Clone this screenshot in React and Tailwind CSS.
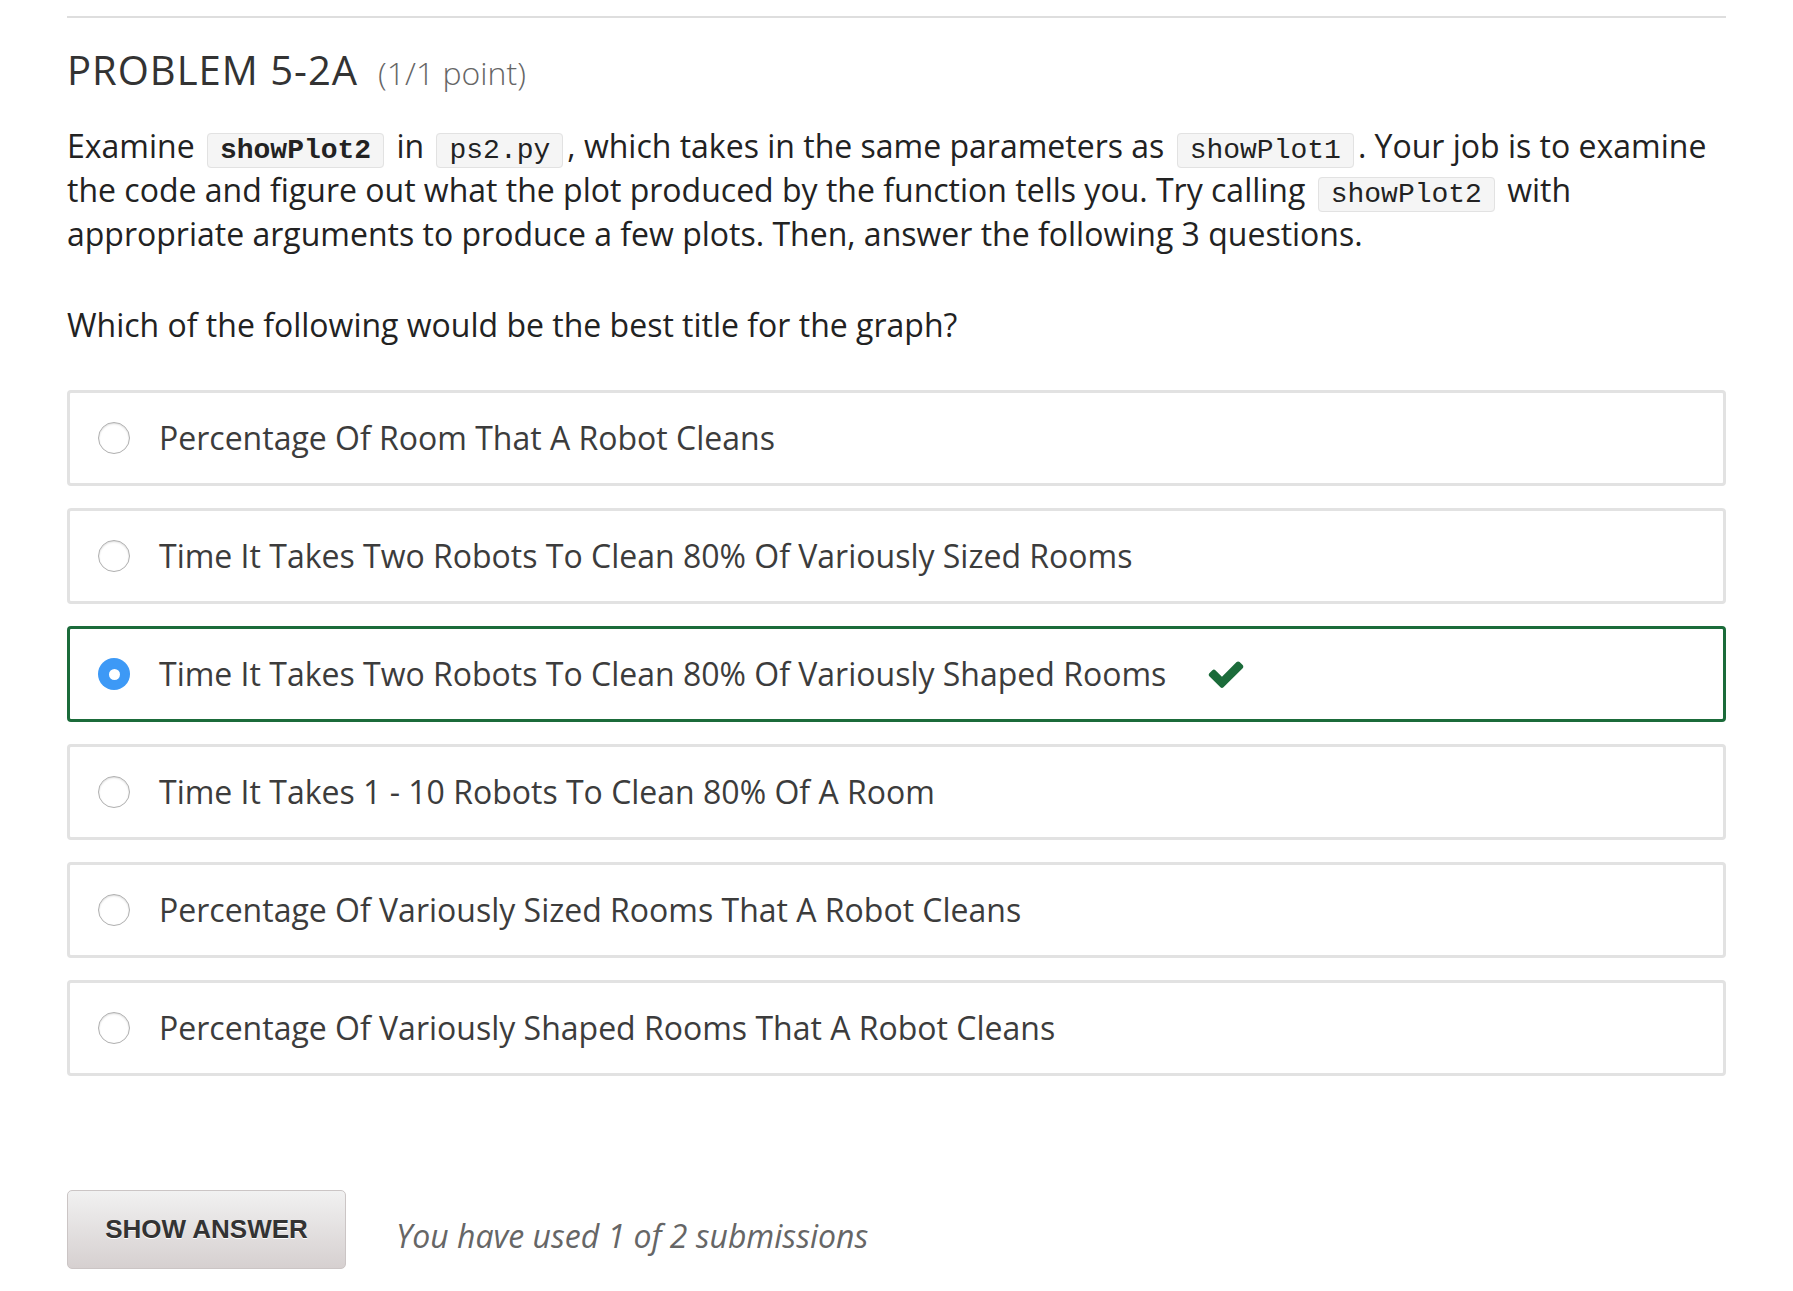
import React from 'react';

const options = [
  { id: 'a', label: 'Percentage Of Room That A Robot Cleans' },
  { id: 'b', label: 'Time It Takes Two Robots To Clean 80% Of Variously Sized Rooms' },
  { id: 'c', label: 'Time It Takes Two Robots To Clean 80% Of Variously Shaped Rooms', correct: true },
  { id: 'd', label: 'Time It Takes 1 - 10 Robots To Clean 80% Of A Room' },
  { id: 'e', label: 'Percentage Of Variously Sized Rooms That A Robot Cleans' },
  { id: 'f', label: 'Percentage Of Variously Shaped Rooms That A Robot Cleans' },
];

const Code = ({ children, bold }) => (
  <code
    className={
      "mx-1 px-[12px] py-px rounded-[4px] border border-[#e2e2e2] bg-[#f5f5f5] text-[28px] leading-[20px] text-[#222] font-['Liberation_Mono',monospace] " +
      (bold ? 'font-bold' : 'font-normal')
    }
  >
    {children}
  </code>
);

const CheckIcon = () => (
  <svg viewBox="0 0 1792 1792" className="w-[40px] h-[40px] fill-[#1b6b3a]">
    <path d="M1671 566q0 40-28 68l-724 724-136 136q-28 28-68 28t-68-28l-136-136-362-362q-28-28-28-68t28-68l136-136q28-28 68-28t68 28l294 295 656-657q28-28 68-28t68 28l136 136q28 28 28 68z" />
  </svg>
);

const Radio = ({ checked }) =>
  checked ? (
    <span className="flex items-center justify-center w-[32px] h-[32px] rounded-full bg-[#3d99f6] shrink-0">
      <span className="w-[11px] h-[11px] rounded-full bg-white" />
    </span>
  ) : (
    <span className="w-[32px] h-[32px] rounded-full border border-[#b0b0b0] bg-white shadow-[inset_0_1px_2px_rgba(0,0,0,0.15)] shrink-0" />
  );

export default function App() {
  const selected = 'c';

  return (
    <div className="min-h-screen bg-white px-[67px] pt-[16px] font-['Open_Sans',sans-serif]">
      <div className="border-t-2 border-[#dedede]" />

      {/* Problem header */}
      <h2 className="mt-[28px] flex items-baseline leading-[48px]">
        <span className="text-[40px] tracking-[1px] text-[#333]">PROBLEM 5-2A</span>
        <span className="ml-[20px] text-[32px] font-light text-[#666]">(1/1 point)</span>
      </h2>

      <p className="mt-[27px] text-[32px] leading-[44px] text-[#222]">
        Examine <Code bold>showPlot2</Code> in <Code>ps2.py</Code>, which takes in the same parameters as{' '}
        <Code>showPlot1</Code>. Your job is to examine the code and figure out what the plot produced by the
        function tells you. Try calling <Code>showPlot2</Code> with appropriate arguments to produce a few plots.
        Then, answer the following 3 questions.
      </p>

      <p className="mt-[47px] text-[32px] leading-[44px] text-[#222]">
        Which of the following would be the best title for the graph?
      </p>

      <div className="mt-[43px] flex flex-col gap-[22px]">
        {options.map((opt) => {
          const isSel = opt.id === selected;
          return (
            <label
              key={opt.id}
              className={
                'flex items-center h-[96px] rounded-[4px] border-[3px] pl-[28px] ' +
                (isSel ? 'border-[#1b6b3a]' : 'border-[#e2e2e2]')
              }
            >
              <Radio checked={isSel} />
              <span className="ml-[29px] text-[32px] text-[#3c3c3c]">{opt.label}</span>
              {opt.correct && isSel && (
                <span className="ml-[40px] flex items-center">
                  <CheckIcon />
                </span>
              )}
            </label>
          );
        })}
      </div>

      <div className="mt-[114px] flex items-center">
        <button className="w-[279px] h-[79px] rounded-[5px] border border-[#cbc5c5] bg-gradient-to-b from-[#f1f1f1] to-[#d6d0d0] text-[26px] font-bold text-[#333] font-['Liberation_Sans',Arial,sans-serif] [text-shadow:0_1px_0_#fff]">
          SHOW ANSWER
        </button>
        <span className="ml-[50px] mt-[12px] text-[32px] italic text-[#666]">You have used 1 of 2 submissions</span>
      </div>
    </div>
  );
}
